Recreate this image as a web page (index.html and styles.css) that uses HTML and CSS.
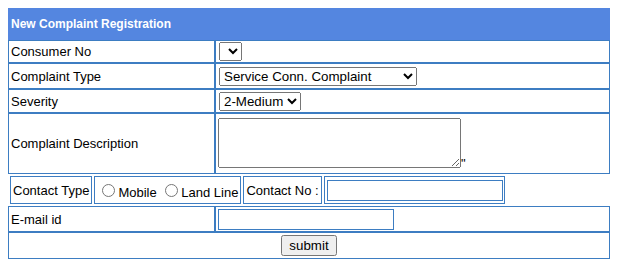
FILE: index.html
```html
<!DOCTYPE html>
<html>
<head>
<meta charset="utf-8">
<title>New Complaint Registration</title>
<link rel="stylesheet" href="styles.css">
</head>
<body>
<table class="form">
  <tr class="r-head"><td class="head" colspan="2">New Complaint Registration</td></tr>
  <tr class="r-consumer">
    <td class="label">Consumer No</td>
    <td class="field"><select class="sel sel-empty"><option></option></select></td>
  </tr>
  <tr class="r-type">
    <td class="label">Complaint Type</td>
    <td class="field"><select class="sel sel-type"><option selected>Service Conn. Complaint</option><option>Billing Complaint</option><option>Meter Complaint</option></select></td>
  </tr>
  <tr class="r-sev">
    <td class="label">Severity</td>
    <td class="field"><select class="sel sel-sev"><option>1-High</option><option selected>2-Medium</option><option>3-Low</option></select></td>
  </tr>
  <tr class="r-desc">
    <td class="label">Complaint Description</td>
    <td class="field"><textarea class="desc"></textarea>"</td>
  </tr>
  <tr class="r-contact">
    <td class="nest" colspan="2">
      <table class="inner">
        <tr>
          <td class="c-type">Contact Type</td>
          <td class="c-radio"><label><input type="radio" name="ct">Mobile</label> <label><input type="radio" name="ct">Land Line</label></td>
          <td class="c-no">Contact No :</td>
          <td class="c-input"><input type="text" class="txt"></td>
        </tr>
      </table>
    </td>
  </tr>
  <tr class="r-email">
    <td class="label">E-mail id</td>
    <td class="field"><input type="text" class="txt"></td>
  </tr>
  <tr class="r-submit">
    <td class="submit-cell" colspan="2"><button type="button" class="btn">submit</button></td>
  </tr>
</table>
</body>
</html>
```

FILE: styles.css
```css
body {
  margin: 8px;
  background: #ffffff;
  font-family: Arial, "Liberation Sans", sans-serif;
  font-size: 13px;
  color: #000;
}

.form {
  width: 602px;
  border-spacing: 0;
  border-collapse: separate;
  font-family: Arial, "Liberation Sans", sans-serif;
  font-size: 13px;
}

.form td {
  border: 1px solid #3d7dc2;
  padding: 1px 2px;
  vertical-align: middle;
}

.form td.head {
  border: none;
  background: #5486e0;
  color: #fff;
  font-weight: bold;
  font-size: 12px;
  padding: 0 3px;
}

.form td.label {
  width: 201px;
}

.r-head { height: 32px; }
.r-consumer { height: 23px; }
.r-type { height: 26px; }
.r-sev { height: 24px; }
.r-desc { height: 61px; }
.r-contact { height: 32px; }
.r-email { height: 26px; }
.r-submit { height: 27px; }

.sel {
  font-family: Arial, "Liberation Sans", sans-serif;
  font-size: 13.333px;
  height: 19px;
  margin: 0 0 0 1px;
  color: #000;
}
.sel-empty { width: 23px; }
.sel-type { width: 198px; }
.sel-sev { width: 82px; }

.desc {
  width: 243px;
  height: 50px;
  box-sizing: border-box;
  margin: 2px 0 0 0;
  vertical-align: baseline;
  font-family: "Liberation Mono", monospace;
  font-size: 13px;
}

.form td.nest {
  border: none;
  padding: 0;
}

.inner {
  border-spacing: 2px;
  border-collapse: separate;
  font-size: 13px;
}

.inner td {
  height: 26px;
  padding: 0 2px;
}

.c-radio label { white-space: nowrap; }
.c-radio input { margin: 3px 3px 0 5px; }

.form td.c-input { padding: 0 1px 0 2px; }

.txt {
  width: 176px;
  height: 21px;
  box-sizing: border-box;
  border: 1px solid #3d7dc2;
  margin: 0;
  padding: 1px 2px;
  font-family: Arial, "Liberation Sans", sans-serif;
  font-size: 13.333px;
}

.submit-cell { text-align: center; }

.btn {
  font-family: Arial, "Liberation Sans", sans-serif;
  font-size: 13.333px;
  width: 56px;
  height: 21px;
  padding: 0;
}
```
